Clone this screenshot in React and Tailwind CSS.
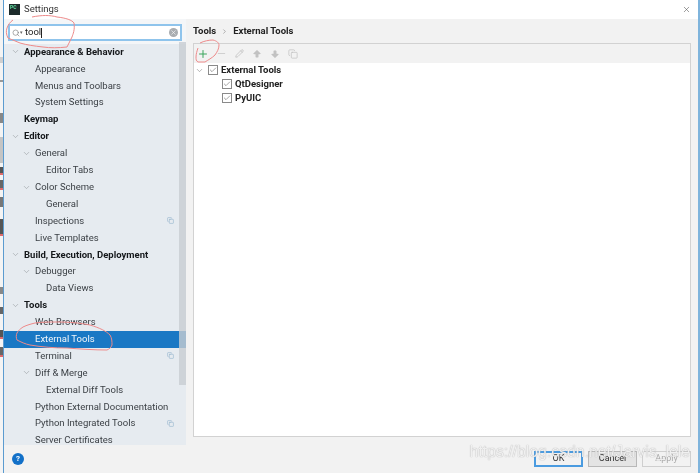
import { ChevronDown, ChevronRight, Plus, Minus, Pencil, ArrowBigUp, ArrowBigDown, Copy, Search, X, Check } from "lucide-react";

const font = { fontFamily: 'Roboto, "Noto Sans", sans-serif' };

// level = indent, arrow = has a chevron, bold = group header, tag = has the small copy icon
const tree = [
  { label: "Appearance & Behavior", level: 0, arrow: true, bold: true },
  { label: "Appearance", level: 1 },
  { label: "Menus and Toolbars", level: 1 },
  { label: "System Settings", level: 1 },
  { label: "Keymap", level: 0, bold: true },
  { label: "Editor", level: 0, arrow: true, bold: true },
  { label: "General", level: 1, arrow: true },
  { label: "Editor Tabs", level: 2 },
  { label: "Color Scheme", level: 1, arrow: true },
  { label: "General", level: 2 },
  { label: "Inspections", level: 1, tag: true },
  { label: "Live Templates", level: 1 },
  { label: "Build, Execution, Deployment", level: 0, arrow: true, bold: true },
  { label: "Debugger", level: 1, arrow: true },
  { label: "Data Views", level: 2 },
  { label: "Tools", level: 0, arrow: true, bold: true },
  { label: "Web Browsers", level: 1 },
  { label: "External Tools", level: 1, selected: true },
  { label: "Terminal", level: 1, tag: true },
  { label: "Diff & Merge", level: 1, arrow: true },
  { label: "External Diff Tools", level: 2 },
  { label: "Python External Documentation", level: 1 },
  { label: "Python Integrated Tools", level: 1, tag: true },
  { label: "Server Certificates", level: 1 },
];

const indent = ["pl-[20px]", "pl-[31px]", "pl-[42px]"];
const arrowPos = ["left-[7px]", "left-[18px]", "left-[29px]"];

function TreeRow({ row }) {
  return (
    <div
      className={`relative h-[16.9px] shrink-0 flex items-center text-[9.5px] whitespace-nowrap ${indent[row.level]} ${
        row.selected ? "bg-[#1a78c4] text-[#f2f6fa]" : "text-[#3a3f44]"
      } ${row.bold ? "font-bold text-[#15181b]" : ""}`}
    >
      {row.arrow && (
        <ChevronDown size={9} strokeWidth={1.4} className={`absolute text-[#8c9296] ${arrowPos[row.level]}`} />
      )}
      {row.label}
      {row.tag && <Copy size={7} strokeWidth={1.6} className="absolute left-[163px] text-[#7fa6c4]" />}
    </div>
  );
}

function CheckBox() {
  return (
    <span className="w-[10px] h-[10px] border border-[#8a8a8a] bg-white flex items-center justify-center shrink-0">
      <Check size={8} strokeWidth={1.6} className="text-[#555]" />
    </span>
  );
}

function Btn({ children, cls }) {
  return (
    <div className={`w-[49px] h-[16px] flex items-center justify-center text-[9px] ${cls}`}>{children}</div>
  );
}

function ToolIcon({ children }) {
  return <span className="w-[18px] flex items-center justify-center shrink-0">{children}</span>;
}

export default function App() {
  return (
    <div className="relative w-[700px] h-[473px] overflow-hidden flex bg-white blur-[0.35px]" style={font}>
      {/* sliver of the page behind the dialog */}
      <div className="w-[3px] bg-[#f4f4f4] flex flex-col shrink-0">
        <div className="h-[57px] shrink-0" />
        <div className="h-[6px] shrink-0 bg-[#cfcfcf]" />
        <div className="h-[17px] shrink-0" />
        <div className="h-[2px] shrink-0 bg-[#999]" />
        <div className="h-[31px] shrink-0" />
        <div className="h-[10px] shrink-0 bg-[#888]" />
        <div className="h-[14px] shrink-0" />
        <div className="h-[26px] shrink-0 bg-[#c4c4c4]" />
        <div className="h-[4px] shrink-0" />
        <div className="h-[6px] shrink-0 bg-[#555]" />
        <div className="h-[2px] shrink-0 bg-[#e06a6a]" />
        <div className="h-[5px] shrink-0" />
        <div className="h-[8px] shrink-0 bg-[#666]" />
        <div className="h-[2px] shrink-0 bg-[#e06a6a]" />
        <div className="h-[7px] shrink-0" />
        <div className="h-[10px] shrink-0 bg-[#777]" />
        <div className="h-[12px] shrink-0" />
        <div className="h-[15px] shrink-0 bg-[#555]" />
        <div className="h-[2px] shrink-0 bg-[#e06a6a]" />
        <div className="h-[51px] shrink-0" />
        <div className="h-[7px] shrink-0 bg-[#888]" />
        <div className="h-[13px] shrink-0" />
        <div className="h-[7px] shrink-0 bg-[#666]" />
        <div className="h-[16px] shrink-0" />
        <div className="h-[7px] shrink-0 bg-[#555]" />
        <div className="h-[2px] shrink-0 bg-[#e06a6a]" />
        <div className="h-[8px] shrink-0" />
        <div className="h-[8px] shrink-0 bg-[#666]" />
        <div className="h-[2px] shrink-0 bg-[#e06a6a]" />
      </div>

      <div className="flex-1 flex flex-col border-l border-r-2 border-[#5b9bd0] border-r-[#7fb4dc] min-w-0">
        {/* title bar */}
        <div className="h-[19px] shrink-0 flex items-center bg-white pl-[5px] pr-[7px] relative">
          <span className="w-[11px] h-[11px] bg-[#1c2b2b] mr-[4px] flex items-start justify-start pl-[1px] text-[5px] leading-[6px] font-bold text-[#5fe0a0]">
            PC
          </span>
          <span className="text-[9.5px] text-[#333]">Settings</span>
          <X size={9} strokeWidth={1.5} className="ml-auto text-[#555]" />
        </div>

        <div className="flex-1 flex min-h-0">
          {/* sidebar */}
          <div className="w-[182px] shrink-0 bg-[#e6ebf0] flex flex-col relative overflow-hidden">
            <div className="h-[24.5px] shrink-0 px-[4px] pt-[5px] pb-[1px] bg-[#f4f6f8]">
              <div className="h-[17px] border-2 border-[#8fc4ec] bg-white flex items-center pl-[2px] pr-[2px]">
                <Search size={8} strokeWidth={1.8} className="text-[#777]" />
                <span className="text-[5px] text-[#666] mr-[2px]">▾</span>
                <span className="text-[9.5px] text-[#222]">tool</span>
                <span className="w-[1px] h-[10px] bg-[#222]" />
                <span className="ml-auto w-[9px] h-[9px] rounded-full bg-[#a9adb1] flex items-center justify-center">
                  <X size={7} strokeWidth={2} className="text-white" />
                </span>
              </div>
            </div>
            <div className="flex flex-col">
              {tree.map((row, i) => (
                <TreeRow key={i} row={row} />
              ))}
            </div>
            {/* scrollbar thumb */}
            <div className="absolute right-0 top-[23px] w-[7px] h-[343px] bg-[#c8cdd2] opacity-80" />
          </div>

          {/* right side */}
          <div className="flex-1 bg-[#f2f2f2] flex flex-col px-[7px] min-w-0">
            <div className="h-[24px] shrink-0 flex items-center text-[9.5px] font-bold text-[#222]">
              Tools
              <ChevronRight size={7} strokeWidth={1.6} className="mx-[5px] text-[#666]" />
              External Tools
            </div>
            <div className="h-[394px] border border-[#d2d2d2] flex flex-col">
              <div className="h-[19px] shrink-0 flex items-center bg-[#f2f2f2]">
                <ToolIcon><Plus size={12} strokeWidth={2} className="text-[#3ba55c]" /></ToolIcon>
                <ToolIcon><Minus size={11} strokeWidth={1.6} className="text-[#c2c2c2]" /></ToolIcon>
                <ToolIcon><Pencil size={9} strokeWidth={2} className="text-[#bdbdbd]" /></ToolIcon>
                <ToolIcon><ArrowBigUp size={10} strokeWidth={1} className="text-[#c2c2c2] fill-[#c2c2c2]" /></ToolIcon>
                <ToolIcon><ArrowBigDown size={10} strokeWidth={1} className="text-[#c2c2c2] fill-[#c2c2c2]" /></ToolIcon>
                <ToolIcon><Copy size={10} strokeWidth={1.6} className="text-[#bdbdbd]" /></ToolIcon>
              </div>
              <div className="flex-1 bg-white text-[9.5px] font-bold text-[#222]">
                <div className="h-[14px] flex items-center gap-[3px]">
                  <ChevronDown size={9} strokeWidth={1.4} className="text-[#777] ml-[1px] mr-[1px]" />
                  <CheckBox />
                  External Tools
                </div>
                <div className="h-[14px] flex items-center pl-[28px] gap-[3px]">
                  <CheckBox />
                  QtDesigner
                </div>
                <div className="h-[14px] flex items-center pl-[28px] gap-[3px]">
                  <CheckBox />
                  PyUIC
                </div>
              </div>
            </div>
          </div>
        </div>

        {/* footer */}
        <div className="h-[28px] shrink-0 bg-[#f2f2f2] flex items-center pl-[8px] pr-[7px]">
          <span className="w-[12px] h-[12px] rounded-full bg-[#1270c8] text-white text-[8px] font-bold flex items-center justify-center">
            ?
          </span>
          <div className="ml-auto flex gap-[5px] mb-[1px]">
            <Btn cls="border-2 border-[#4a9be0] text-[#333]">OK</Btn>
            <Btn cls="border border-[#b8b8b8] bg-[#e4e4e4] text-[#333]">Cancel</Btn>
            <Btn cls="border border-[#cfcfcf] text-[#aaa]">Apply</Btn>
          </div>
        </div>
      </div>

      {/* red pen marks drawn over the screenshot */}
      <svg className="absolute inset-0 pointer-events-none" width="700" height="473" fill="none" stroke="#ee8a8a" strokeWidth="1">
        <path d="M32 17 C42 15 50 15 57 17 C66 18 72 20 74 23 C75 30 73 34 72 37 L67 47 C58 48 50 48 43 47 C34 46 27 45 20 43 L8 38 C6 34 6 31 7 28 C8 25 10 22 13 20" />
        <path d="M200 43 C204 41 209 40 213 40 C217 41 219 43 219 45 C219 49 217 52 215 55 C212 58 208 60 205 62 L198 62 C196 61 196 59 196 57 C196 54 197 51 198 48" />
        <path d="M35 323 C42 322 50 322 57 322 C70 322 80 323 90 325 C100 328 106 331 110 335 C112 338 112 342 112 345 C111 348 109 349 107 350 C94 350 80 349 67 348 C54 348 42 347 30 345 C25 344 21 342 17 340 C16 338 16 335 17 333 C18 331 20 329 23 327 C27 325 31 324 35 323" />
      </svg>

      {/* watermark */}
      <div className="absolute right-[10px] bottom-[9px] text-[15.8px] text-[#ffffffd8] whitespace-nowrap [text-shadow:0_0_1px_#8f8f8f]" style={{ fontFamily: '"Liberation Sans", sans-serif' }}>
        https://blog.csdn.net/Jarvis_lele
      </div>
    </div>
  );
}
